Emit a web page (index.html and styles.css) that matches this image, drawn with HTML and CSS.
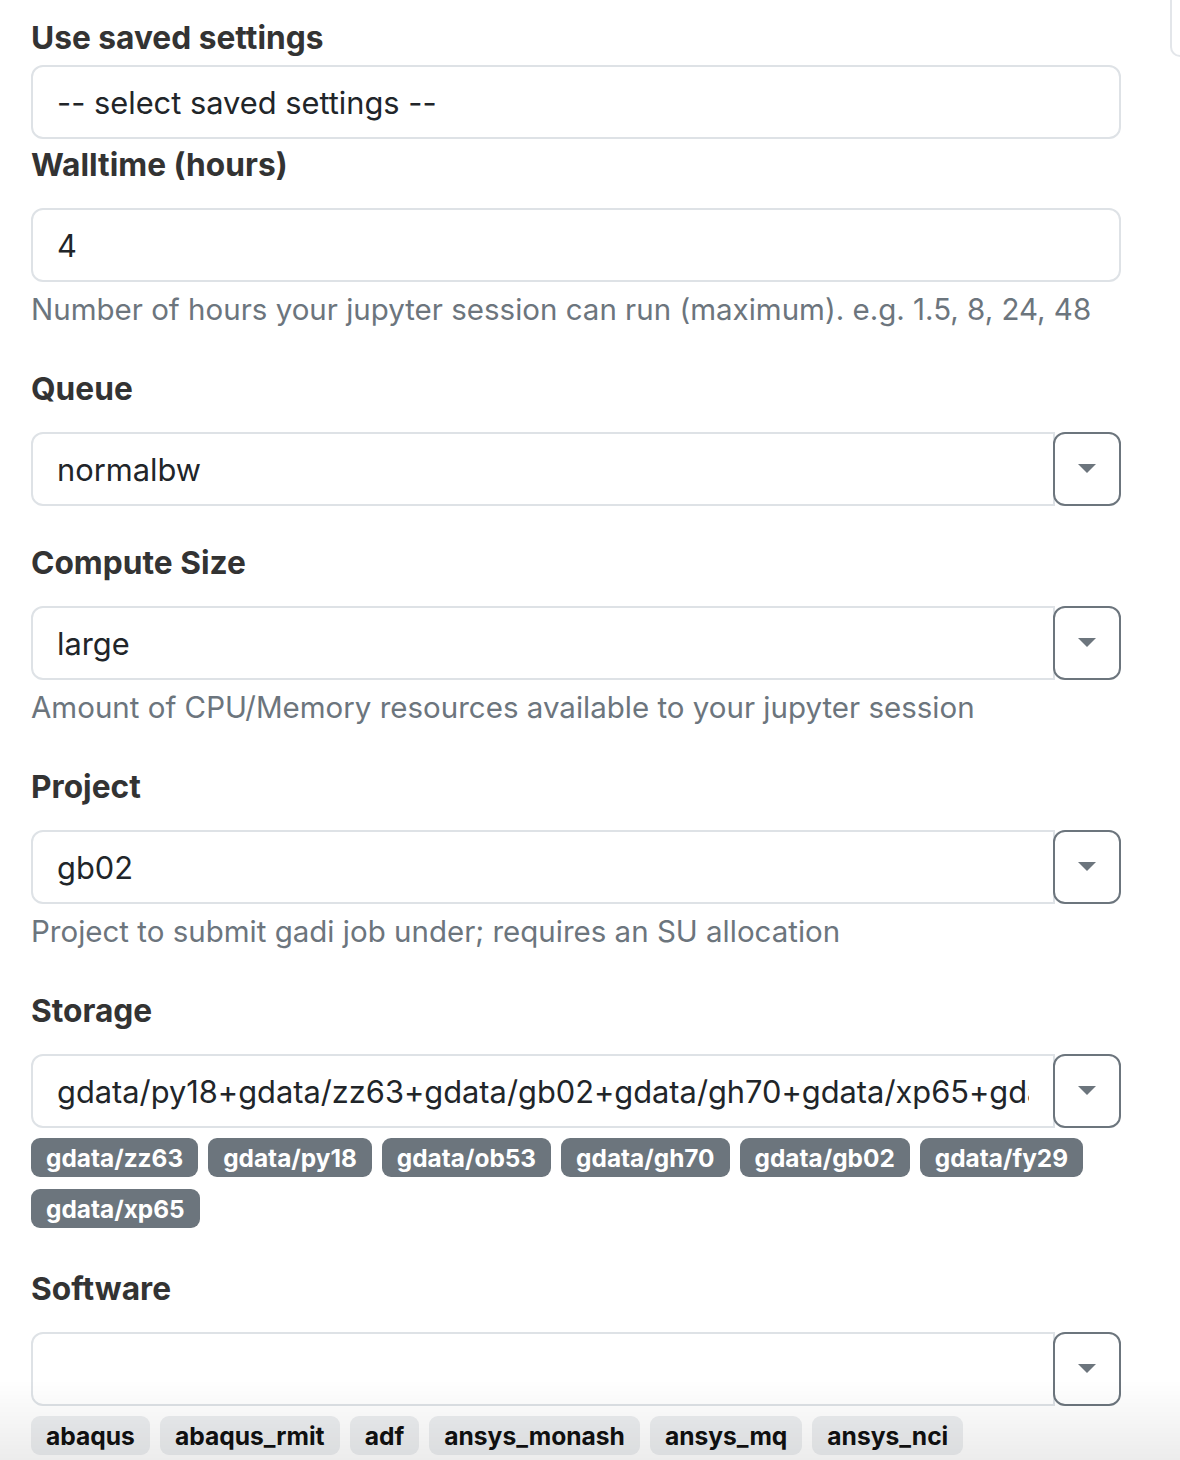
FILE: index.html
```html
<!DOCTYPE html>
<html lang="en">
<head>
<meta charset="utf-8">
<title>Launch settings</title>
<link rel="stylesheet" href="styles.css">
</head>
<body>
<div class="page">
  <form class="form">
    <div class="group group-first">
      <label class="label label-first">Use saved settings</label>
      <select class="control"><option>-- select saved settings --</option></select>
    </div>

    <div class="group">
      <label class="label">Walltime (hours)</label>
      <input class="control" type="text" value="4">
      <div class="help">Number of hours your jupyter session can run (maximum). e.g. 1.5, 8, 24, 48</div>
    </div>

    <div class="group">
      <label class="label">Queue</label>
      <div class="combo">
        <input class="control combo-input" type="text" value="normalbw">
        <button class="combo-btn" type="button"><span class="caret"></span></button>
      </div>
    </div>

    <div class="group">
      <label class="label">Compute Size</label>
      <div class="combo">
        <input class="control combo-input" type="text" value="large">
        <button class="combo-btn" type="button"><span class="caret"></span></button>
      </div>
      <div class="help">Amount of CPU/Memory resources available to your jupyter session</div>
    </div>

    <div class="group">
      <label class="label">Project</label>
      <div class="combo">
        <input class="control combo-input" type="text" value="gb02">
        <button class="combo-btn" type="button"><span class="caret"></span></button>
      </div>
      <div class="help">Project to submit gadi job under; requires an SU allocation</div>
    </div>

    <div class="group">
      <label class="label">Storage</label>
      <div class="combo">
        <input class="control combo-input" type="text" value="gdata/py18+gdata/zz63+gdata/gb02+gdata/gh70+gdata/xp65+gdata/fy29+gdata/ob53">
        <button class="combo-btn" type="button"><span class="caret"></span></button>
      </div>
      <div class="tags">
        <span class="tag tag-dark">gdata/zz63</span>
        <span class="tag tag-dark">gdata/py18</span>
        <span class="tag tag-dark">gdata/ob53</span>
        <span class="tag tag-dark">gdata/gh70</span>
        <span class="tag tag-dark">gdata/gb02</span>
        <span class="tag tag-dark">gdata/fy29</span>
        <span class="tag tag-dark">gdata/xp65</span>
      </div>
    </div>

    <div class="group group-software">
      <label class="label">Software</label>
      <div class="combo">
        <input class="control combo-input" type="text" value="">
        <button class="combo-btn" type="button"><span class="caret"></span></button>
      </div>
      <div class="tags">
        <span class="tag tag-light">abaqus</span>
        <span class="tag tag-light">abaqus_rmit</span>
        <span class="tag tag-light">adf</span>
        <span class="tag tag-light">ansys_monash</span>
        <span class="tag tag-light">ansys_mq</span>
        <span class="tag tag-light">ansys_nci</span>
      </div>
    </div>
  </form>
  <aside class="side"><div class="side-card"></div></aside>
</div>
<div class="fade"></div>
</body>
</html>
```

FILE: styles.css
```css
html, body {
  margin: 0;
  padding: 0;
  background: #ffffff;
  overflow: hidden;
}

body {
  font-family: Inter, "Noto Sans", "Liberation Sans", sans-serif;
  color: #212529;
}

.page {
  display: flex;
  align-items: flex-start;
  padding: 20px 0 0 31px;
}

.form {
  width: 1090px;
  flex: none;
  display: flex;
  flex-direction: column;
}

.side {
  flex: none;
  width: 10px;
  margin-left: 49px;
  margin-top: -20px;
}

.side-card {
  height: 55px;
  border: 2px solid #e3e6ea;
  border-top: none;
  border-right: none;
  border-radius: 0 0 0 12px;
}

.group {
  display: flex;
  flex-direction: column;
  margin-bottom: 39px;
}

.group-first {
  margin-bottom: 8px;
}

.label {
  display: block;
  font-size: 31.7px;
  line-height: 36px;
  font-weight: 700;
  color: #333333;
  margin-bottom: 25px;
}

.label-first {
  margin-bottom: 9px;
}

.control {
  box-sizing: border-box;
  display: block;
  width: 100%;
  height: 74px;
  margin: 0;
  padding: 0 24px;
  font-family: Inter, "Noto Sans", "Liberation Sans", sans-serif;
  font-size: 30.8px;
  color: #212529;
  background: #ffffff;
  border: 2px solid #dee2e6;
  border-radius: 12px;
  outline: none;
  -webkit-appearance: none;
  appearance: none;
}

.combo {
  display: flex;
}

.combo-input {
  width: 1024px;
  flex: none;
  border-radius: 12px 0 0 12px;
}

.combo-btn {
  flex: none;
  width: 68px;
  height: 74px;
  margin: 0 0 0 -2px;
  padding: 0;
  background: #ffffff;
  border: 2px solid #6c757d;
  border-radius: 12px;
  display: flex;
  align-items: center;
  justify-content: center;
  position: relative;
}

.caret {
  display: block;
  width: 0;
  height: 0;
  border-left: 9px solid transparent;
  border-right: 9px solid transparent;
  border-top: 9px solid #6c757d;
  margin-top: -2px;
}

.help {
  margin-top: 5px;
  margin-bottom: 1px;
  font-size: 29.5px;
  line-height: 44px;
  color: #6c757d;
}

.tags {
  display: flex;
  flex-wrap: wrap;
  gap: 12px 10px;
  margin-top: 10px;
  margin-bottom: 4px;
}

.tag {
  display: inline-flex;
  align-items: center;
  height: 39px;
  padding: 0 15px;
  border-radius: 9px;
  font-size: 24.4px;
  font-weight: 700;
  white-space: nowrap;
}

.tag-dark {
  background: #6c757d;
  color: #ffffff;
}

.tag-light {
  background: #eceef0;
  color: #111111;
  font-size: 24.6px;
}

.group-software .tags {
  gap: 10px;
}

.fade {
  position: fixed;
  left: 0;
  right: 0;
  bottom: 0;
  height: 80px;
  background: linear-gradient(to bottom, rgba(0, 0, 0, 0), rgba(0, 0, 0, 0.075));
  pointer-events: none;
}
```
